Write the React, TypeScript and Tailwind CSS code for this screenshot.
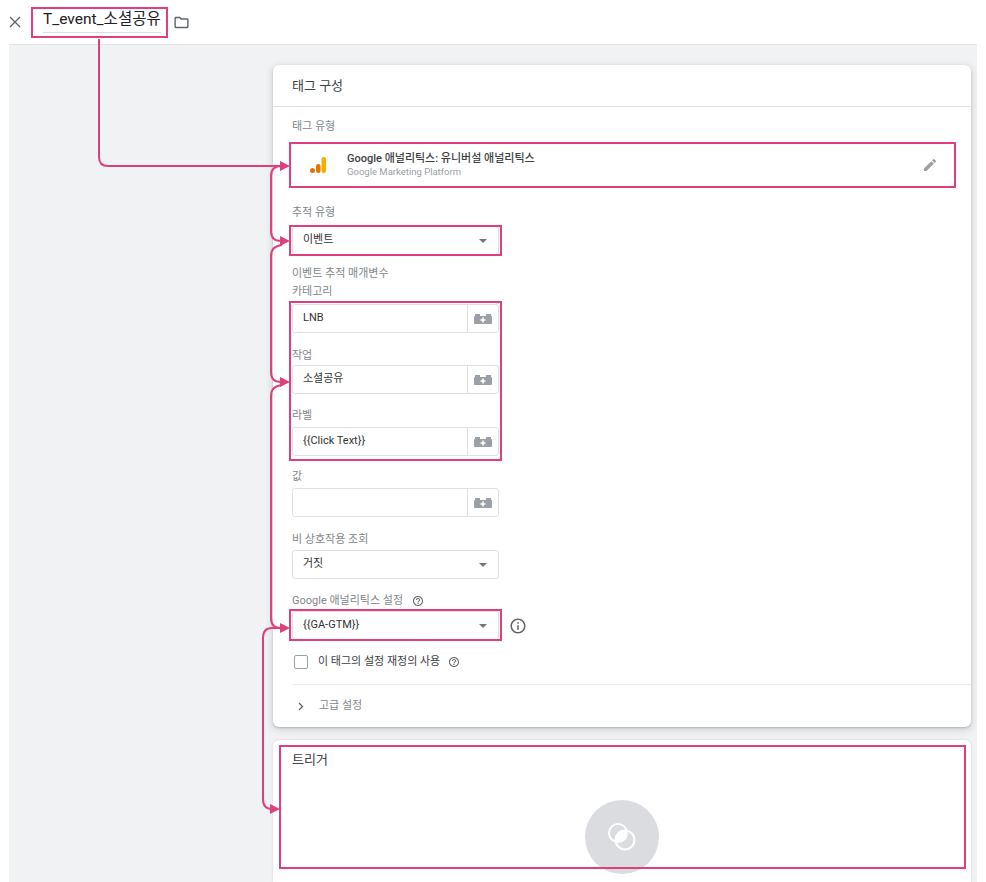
import React from 'react';

// pink annotation outline laid over a field
const Mark = ({ className }: { className: string }) => (
  <span className={`pointer-events-none absolute border-2 border-[#de3f7e] ${className}`} />
);

const Label = ({ children, className = '' }: { children: React.ReactNode; className?: string }) => (
  <div className={`flex h-[14px] items-center text-[11px] leading-[14px] text-[#80868b] ${className}`}>{children}</div>
);

const VarIcon = () => (
  <svg width="18" height="10" viewBox="0 0 18 10">
    <rect x="1" y="0" width="5" height="3" fill="#9aa0a6" />
    <rect x="12" y="0" width="5" height="3" fill="#9aa0a6" />
    <rect x="0" y="2" width="18" height="8" rx="1" fill="#9aa0a6" />
    <path d="M6.5 6h5M9 3.5v5" stroke="#fff" strokeWidth="1.6" />
  </svg>
);

const Caret = () => (
  <svg width="8" height="4" viewBox="0 0 8 4">
    <path d="M0 0h8L4 4z" fill="#757575" />
  </svg>
);

const HelpIcon = ({ size }: { size: number }) => (
  <svg width={size} height={size} viewBox="0 0 24 24" fill="#5f6368">
    <path d="M11 18h2v-2h-2v2zm1-16C6.48 2 2 6.48 2 12s4.48 10 10 10 10-4.48 10-10S17.52 2 12 2zm0 18c-4.41 0-8-3.59-8-8s3.59-8 8-8 8 3.59 8 8-3.59 8-8 8zm0-14c-2.21 0-4 1.79-4 4h2c0-1.1.9-2 2-2s2 .9 2 2c0 2-3 1.75-3 5h2c0-2.25 3-2.5 3-5 0-2.21-1.79-4-4-4z" />
  </svg>
);

const TextField = ({ value }: { value: string }) => (
  <div className="flex h-[29px] w-[207px] rounded-[3px] border border-[#e0e0e0] bg-white">
    <div className="flex flex-1 items-center pl-[10px] text-[11px] text-[#333]">{value}</div>
    <div className="flex w-[31px] items-center justify-center border-l border-[#e0e0e0]">
      <VarIcon />
    </div>
  </div>
);

const SelectField = ({ value }: { value: string }) => (
  <div className="flex h-[29px] w-[207px] items-center justify-between rounded-[3px] border border-[#e0e0e0] bg-white pl-[10px] pr-[11px] text-[11px] text-[#333]">
    <span>{value}</span>
    <Caret />
  </div>
);

const Arrows = () => (
  <svg className="pointer-events-none absolute left-0 top-0" width="986" height="882" viewBox="0 0 986 882" fill="none">
    <g stroke="#de3f7e" strokeWidth="2">
      <path d="M99 39V157Q99 166 108 166H282" />
      <path d="M282 166Q271 166 271 176V231Q271 241 281 241" />
      <path d="M282 245Q271 246 271 256V372Q271 382 281 382" />
      <path d="M282 385Q271 386 271 396V618Q271 628 281 628" />
      <path d="M283 628H272Q263 628 263 638V799Q263 809 272 809" />
    </g>
    <g fill="#de3f7e">
      <path d="M290 166L280 161V171Z" />
      <path d="M290 241L280 236V246Z" />
      <path d="M290 382L280 377V387Z" />
      <path d="M290 628L280 623V633Z" />
      <path d="M280 809L270 804V814Z" />
    </g>
  </svg>
);

export default function App() {
  return (
    <div className="relative flex h-[882px] w-full flex-col overflow-hidden bg-white font-[Roboto,'Noto_Sans_CJK_KR',sans-serif]">
      {/* top bar */}
      <div className="flex h-[44px] shrink-0 items-center pl-[9px]">
        <svg width="12" height="12" viewBox="0 0 12 12">
          <path d="M1 1l10 10M11 1L1 11" stroke="#5f6368" strokeWidth="1.3" />
        </svg>
        <div className="relative ml-[12px] h-[27px] pl-[10px] pr-[5px]">
          <div className="h-[24px] whitespace-nowrap border-b border-[#dadce0] text-[15.5px] leading-[20px] text-[#202124]">T_event_소셜공유</div>
          <Mark className="-left-[2px] -right-[2px] -top-[2px] -bottom-[2px]" />
        </div>
        <svg className="ml-[7px]" width="17" height="17" viewBox="0 0 24 24" fill="#5f6368">
          <path d="M9.17 6l2 2H20v10H4V6h5.17M10 4H4c-1.1 0-1.99.9-1.99 2L2 18c0 1.1.9 2 2 2h16c1.1 0 2-.9 2-2V8c0-1.1-.9-2-2-2h-8l-2-2z" />
        </svg>
      </div>

      {/* workspace */}
      <div className="mx-[9px] flex flex-1 flex-col border-t border-[#e3e4e6] bg-[#f1f2f4] pl-[264px] pr-[6px] pt-[20px]">
        {/* tag configuration card */}
        <div className="rounded-[6px] bg-white shadow-[0_1px_2px_rgba(0,0,0,0.18),0_2px_6px_2px_rgba(0,0,0,0.1)]">
          <div className="flex h-[42px] items-center border-b border-[#e0e0e0] pl-[19px] text-[13px] text-[#3c4043]">태그 구성</div>

          <div className="pl-[19px] pt-[13px]">
            <Label>태그 유형</Label>
            <div className="relative ml-[-1px] mt-[10px] flex h-[42px] w-[663px] items-center pl-[19px] pr-[16px]">
              <svg width="16" height="16" viewBox="0 0 16 16">
                <circle cx="2.5" cy="13.5" r="2.5" fill="#e37400" />
                <rect x="6" y="7" width="4.5" height="9" rx="2.25" fill="#e37400" />
                <rect x="11.5" y="0" width="4.5" height="16" rx="2.25" fill="#f9ab00" />
              </svg>
              <div className="ml-[21px] flex flex-col">
                <span className="text-[11px] font-medium leading-[14px] text-[#3c4043]">Google 애널리틱스: 유니버설 애널리틱스</span>
                <span className="text-[9.5px] leading-[12px] text-[#9aa0a6]">Google Marketing Platform</span>
              </div>
              <svg className="ml-auto" width="16" height="16" viewBox="0 0 24 24" fill="#9e9e9e">
                <path d="M3 17.25V21h3.75L17.81 9.94l-3.75-3.75L3 17.25zM20.71 7.04c.39-.39.39-1.02 0-1.41l-2.34-2.34c-.39-.39-1.02-.39-1.41 0l-1.83 1.83 3.75 3.75 1.83-1.83z" />
              </svg>
              <Mark className="-inset-[2px]" />
            </div>

            <Label className="mt-[20px]">추적 유형</Label>
            <div className="relative mt-[6px] w-[207px]">
              <SelectField value="이벤트" />
              <Mark className="-left-[3px] -right-[3px] -top-[1px] -bottom-[1px]" />
            </div>

            <Label className="mt-[12px]">이벤트 추적 매개변수</Label>
            <Label className="mt-[4px]">카테고리</Label>
            <div className="relative mt-[5px] w-[207px]">
              <TextField value="LNB" />
              <Label className="mt-[16px]">작업</Label>
              <div className="mt-[2px]">
                <TextField value="소셜공유" />
              </div>
              <Label className="mt-[15px]">라벨</Label>
              <div className="mt-[4px]">
                <TextField value="{{Click Text}}" />
              </div>
              <Mark className="-left-[3px] -right-[3px] -top-[3px] -bottom-[5px]" />
            </div>

            <Label className="mt-[14px]">값</Label>
            <div className="mt-[4px]">
              <TextField value="" />
            </div>

            <Label className="mt-[16px]">비 상호작용 조회</Label>
            <div className="mt-[3px]">
              <SelectField value="거짓" />
            </div>

            <Label className="mt-[15px] gap-[9px]">
              Google 애널리틱스 설정
              <HelpIcon size={12} />
            </Label>
            <div className="mt-[3px] flex items-center">
              <div className="relative w-[207px]">
                <SelectField value="{{GA-GTM}}" />
                <Mark className="-left-[3px] -right-[3px] -top-[2px] -bottom-[1px]" />
              </div>
              <svg className="ml-[10px]" width="18" height="18" viewBox="0 0 24 24" fill="#5f6368">
                <path d="M11 7h2v2h-2zm0 4h2v6h-2zm1-9C6.48 2 2 6.48 2 12s4.48 10 10 10 10-4.48 10-10S17.52 2 12 2zm0 18c-4.41 0-8-3.59-8-8s3.59-8 8-8 8 3.59 8 8-3.59 8-8 8z" />
              </svg>
            </div>

            <div className="ml-[2px] mt-[15px] flex h-[14px] items-center">
              <div className="h-[14px] w-[14px] rounded-[2px] border-[1.5px] border-[#9aa0a6]" />
              <span className="ml-[10px] text-[11px] text-[#3c4043]">이 태그의 설정 재정의 사용</span>
              <span className="ml-[8px] flex">
                <HelpIcon size={12} />
              </span>
            </div>

            <div className="mt-[15px] border-t border-[#e8eaed]" />
            <div className="flex h-[42px] items-center pl-[6px]">
              <svg width="6" height="9" viewBox="0 0 6 9">
                <path d="M1 1l3.5 3.5L1 8" stroke="#5f6368" strokeWidth="1.3" fill="none" />
              </svg>
              <span className="ml-[15px] text-[11px] text-[#80868b]">고급 설정</span>
            </div>
          </div>
        </div>

        {/* trigger card */}
        <div className="relative mt-[13px] flex-1 rounded-t-[6px] bg-white shadow-[0_0_3px_rgba(0,0,0,0.12)]">
          <div className="pl-[19px] pt-[13px] text-[13px] leading-[14px] text-[#3c4043]">트리거</div>
          <div className="mx-auto mt-[33px] flex h-[74px] w-[74px] items-center justify-center rounded-full bg-[#dadce0]">
            <svg width="34" height="34" viewBox="0 0 34 34" fill="none">
              <defs>
                <clipPath id="c1">
                  <circle cx="13" cy="13" r="9" />
                </clipPath>
              </defs>
              <circle cx="20" cy="20" r="9.5" fill="#fff" clipPath="url(#c1)" />
              <circle cx="13" cy="13" r="9" stroke="#fff" strokeWidth="2" />
              <circle cx="20" cy="20" r="9.5" stroke="#fff" strokeWidth="2" />
            </svg>
          </div>
          <Mark className="left-[6px] right-[5px] top-[5px] h-[124px]" />
        </div>
      </div>

      <Arrows />
    </div>
  );
}
